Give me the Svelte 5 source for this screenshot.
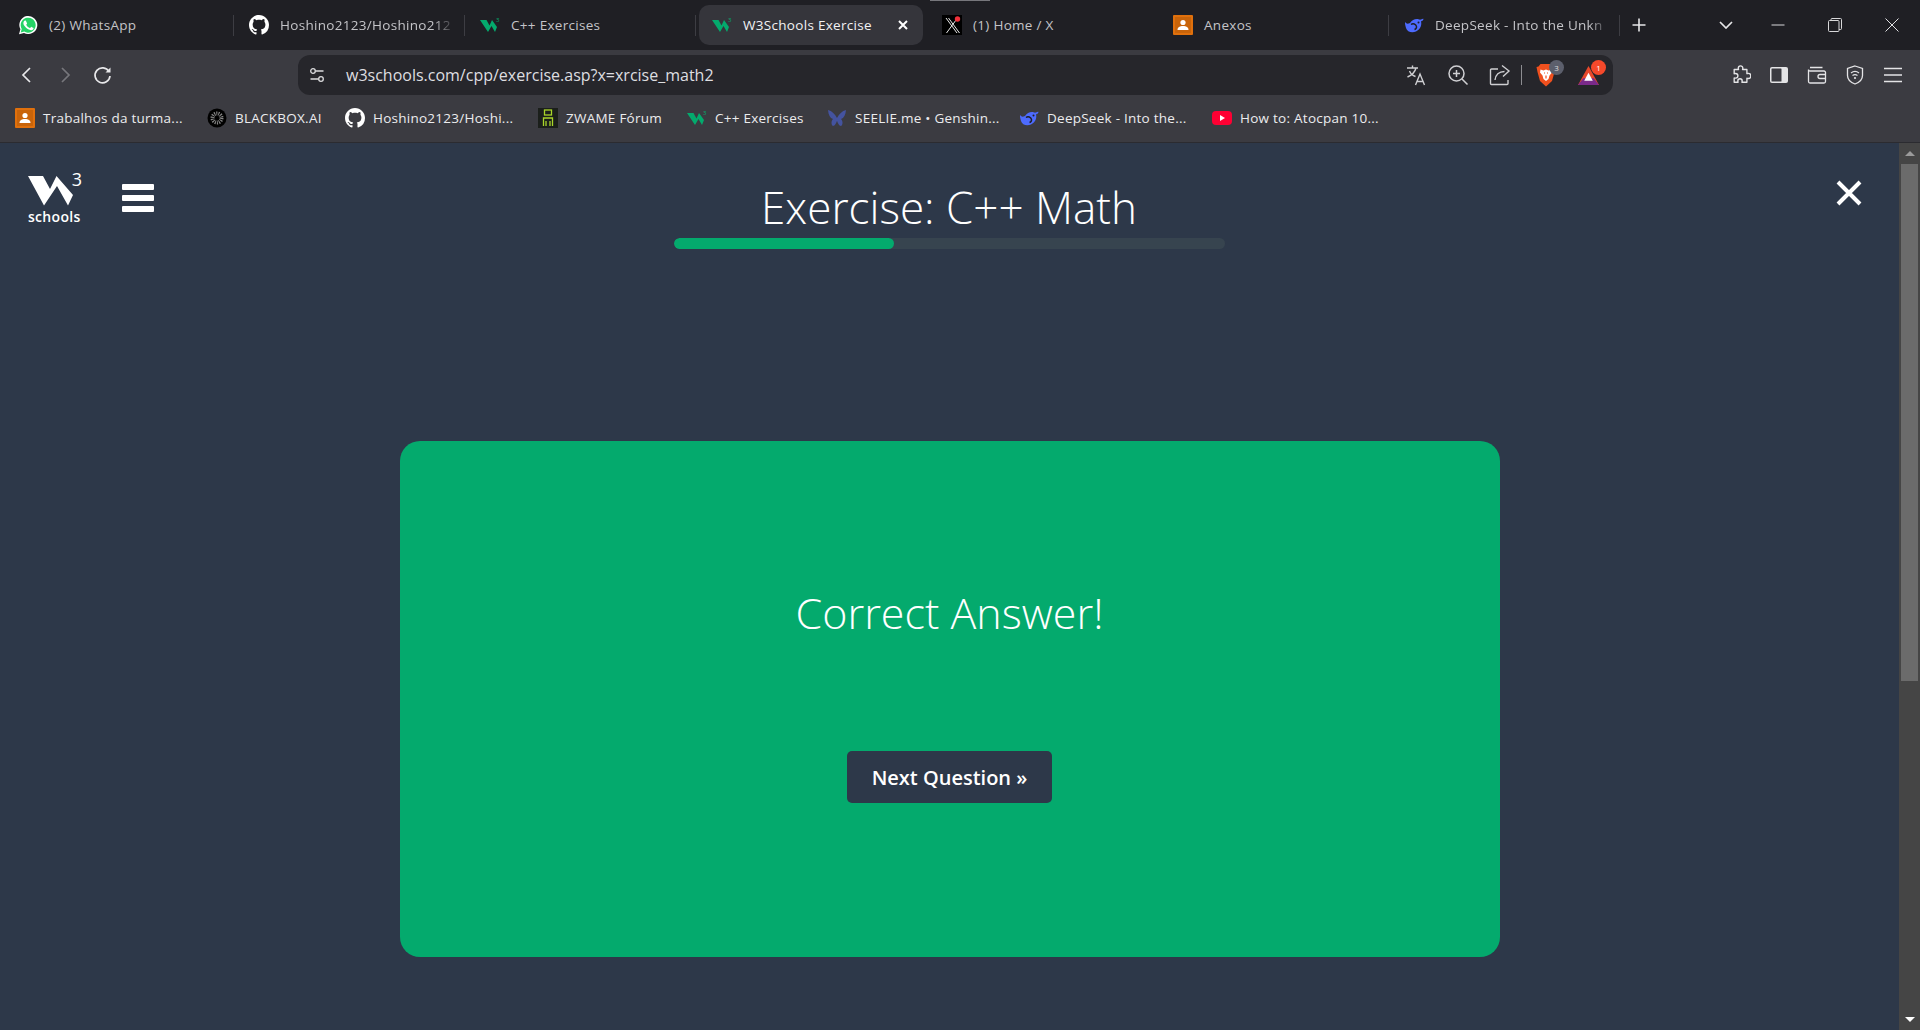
<script lang="ts">
  const ghPath =
    'M8 0C3.58 0 0 3.58 0 8c0 3.54 2.29 6.53 5.47 7.59.4.07.55-.17.55-.38 0-.19-.01-.82-.01-1.49-2.01.37-2.53-.49-2.69-.94-.09-.23-.48-.94-.82-1.13-.28-.15-.68-.52-.01-.53.63-.01 1.08.58 1.23.82.72 1.21 1.87.87 2.33.66.07-.52.28-.87.51-1.07-1.78-.2-3.64-.89-3.64-3.95 0-.87.31-1.59.82-2.15-.08-.2-.36-1.02.08-2.12 0 0 .67-.21 2.2.82.64-.18 1.32-.27 2-.27.68 0 1.36.09 2 .27 1.53-1.04 2.2-.82 2.2-.82.44 1.1.16 1.92.08 2.12.51.56.82 1.27.82 2.15 0 3.07-1.87 3.75-3.65 3.95.29.25.54.73.54 1.48 0 1.07-.01 1.93-.01 2.2 0 .21.15.46.55.38A8.013 8.013 0 0016 8c0-4.42-3.58-8-8-8z';

  const tabs = [
    { icon: 'whatsapp', title: '(2) WhatsApp' },
    { icon: 'github', title: 'Hoshino2123/Hoshino212', fade: true },
    { icon: 'w3', title: 'C++ Exercises' },
    { icon: 'w3', title: 'W3Schools Exercise', active: true },
    { icon: 'x', title: '(1) Home / X', noSep: true, marker: true },
    { icon: 'classroom', title: 'Anexos' },
    { icon: 'deepseek', title: 'DeepSeek - Into the Unkn', fade: true },
  ];

  const bookmarks = [
    { icon: 'classroom', title: 'Trabalhos da turma...', width: 192 },
    { icon: 'blackbox', title: 'BLACKBOX.AI', width: 138 },
    { icon: 'github', title: 'Hoshino2123/Hoshi...', width: 193 },
    { icon: 'zwame', title: 'ZWAME Fórum', width: 149 },
    { icon: 'w3', title: 'C++ Exercises', width: 140 },
    { icon: 'seelie', title: 'SEELIE.me • Genshin...', width: 192 },
    { icon: 'deepseek', title: 'DeepSeek - Into the...', width: 193 },
    { icon: 'youtube', title: 'How to: Atocpan 10...', width: 190 },
  ];
</script>

{#snippet favicon(name)}
  <svg class="favicon" viewBox="0 0 20 20" aria-hidden="true">
    {#if name === 'whatsapp'}
      <path d="M1 19.2l1.4-4.9A9 9 0 1 1 6 17.9z" fill="#fff" />
      <path d="M2.7 17.5l1-3.5A7.5 7.5 0 1 1 6.3 16.6z" fill="#25d366" />
      <path d="M7.3 5.6c-.3 0-.7.1-1 .5-.4.4-.9 1.100-.9 2.200 0 1.200.9 2.400 1 2.500.100.200 1.800 2.800 4.300 3.800 2.100.8 2.500.7 3 .6.500 0 1.500-.6 1.700-1.200.2-.6.2-1 .1-1.100l-2-1c-.2-.1-.4-.1-.5.1l-.8 1c-.1.1-.3.2-.5.100-1.100-.5-2.600-1.500-3.400-3-.1-.2 0-.3.1-.5l.6-.8c.1-.2.1-.3 0-.5L8 6c-.2-.4-.4-.4-.7-.4z" fill="#fff" />
    {:else if name === 'github'}
      <path d={ghPath} transform="scale(1.25)" fill="#fff" />
    {:else if name === 'w3'}
      <polygon points="0,5 6.500,5 9.500,10.500 12,5 17,12 15,17 11.500,11 8,17" fill="#04aa6d" />
      <text x="16" y="7" class="fav-three">3</text>
    {:else if name === 'x'}
      <rect width="20" height="20" fill="#000" />
      <path d="M4 3l11 15M6.500 3l11 15M15.500 3L4.500 18" stroke="#e8e8e8" stroke-width="1" fill="none" />
      <circle cx="15.500" cy="4" r="2.700" fill="#f0303a" />
    {:else if name === 'classroom'}
      <rect width="20" height="20" rx="1" fill="#e0700c" />
      <rect x="2" y="2" width="16" height="16" fill="#c9640a" />
      <circle cx="10" cy="7.500" r="2.600" fill="#fff" />
      <path d="M4.500 15c0-3 2.500-4 5.500-4s5.500 1 5.500 4z" fill="#fff" />
    {:else if name === 'deepseek'}
      <path d="M1 7c2 2.500 3 1.500 5 1 2-3 5-4.500 8-4 1 .2 1.500 1 3 .5 1-.3 2-1 2.500-.5-.3 1.500-1.500 2-2.500 2.500 1 3-.5 8-5 10-4 1.500-9 .5-10-3.500C1.500 11 .8 9 1 7z" fill="#4d6bfe" />
      <path d="M7 9.500c2-1.500 5-.5 5.500 2 .2 1.500-.5 2.500-2 3" stroke="#1f1f24" stroke-width="1.400" fill="none" />
      <circle cx="14.500" cy="7.500" r="1" fill="#1f1f24" />
    {:else if name === 'blackbox'}
      <circle cx="10" cy="10" r="9.500" fill="#000" />
      <circle cx="10" cy="10" r="4.500" fill="none" stroke="#888" stroke-width="4" stroke-dasharray="1 1" />
    {:else if name === 'zwame'}
      <rect width="20" height="20" fill="#1b1f1b" />
      <rect x="6.500" y="2" width="7" height="5" fill="none" stroke="#a9d52a" stroke-width="1.300" />
      <path d="M5.500 18v-8h9v8M8 18v-5M12 18v-5" stroke="#a9d52a" stroke-width="1.300" fill="none" />
    {:else if name === 'seelie'}
      <path d="M1 2c4 1 7 4 9 8 2-4 5-7 9-8-.5 5-2 8-5 9 2 2 2 6 0 7-2 0-3-3-4-5-1 2-2 5-4 5-2-1-2-5 0-7C3 10 1.500 7 1 2z" fill="#44539f" />
    {:else if name === 'youtube'}
      <rect y="3" width="20" height="14" rx="4" fill="#ff0033" />
      <polygon points="8,7 8,13 13,10" fill="#fff" />
    {/if}
  </svg>
{/snippet}

<div class="browser">
  <div class="tabstrip">
    <div class="tabs">
      {#each tabs as tab}
        <div class="tab" class:active={tab.active} class:nosep={tab.noSep || tab.active}>
          {#if tab.marker}<span class="tab-marker"></span>{/if}
          {@render favicon(tab.icon)}
          <span class="tab-title" class:fade={tab.fade}>{tab.title}</span>
          {#if tab.active}
            <svg class="tab-close" viewBox="0 0 12 12" aria-hidden="true">
              <path d="M2 2l8 8M10 2l-8 8" stroke="#fff" stroke-width="2" fill="none" />
            </svg>
          {/if}
        </div>
      {/each}
    </div>
    <div class="new-tab">
      <svg viewBox="0 0 16 16" aria-hidden="true"><path d="M8 1.500v13M1.500 8h13" stroke="#e6e6e8" stroke-width="1.600" fill="none" /></svg>
    </div>
    <div class="strip-gap"></div>
    <div class="tab-list">
      <svg viewBox="0 0 14 8" aria-hidden="true"><path d="M1 1l6 6 6-6" stroke="#e6e6e8" stroke-width="1.700" fill="none" /></svg>
    </div>
    <div class="win-btn"><svg viewBox="0 0 14 14" aria-hidden="true"><path d="M0.500 7h13" stroke="#d8d8da" stroke-width="1" /></svg></div>
    <div class="win-btn"><svg viewBox="0 0 14 14" aria-hidden="true"><rect x="0.500" y="2.500" width="10.500" height="11" rx="1" fill="none" stroke="#d8d8da" /><path d="M3 2.500V1.500a1 1 0 0 1 1-1h8.500a1 1 0 0 1 1 1V10.500a1 1 0 0 1-1 1H11" fill="none" stroke="#d8d8da" /></svg></div>
    <div class="win-btn"><svg viewBox="0 0 14 14" aria-hidden="true"><path d="M0.500 0.500l13 13M13.500 0.500l-13 13" stroke="#e0e0e2" stroke-width="1" /></svg></div>
  </div>

  <div class="toolbar">
    <div class="nav-btn"><svg viewBox="0 0 20 20" aria-hidden="true"><path d="M13 3l-7 7 7 7" stroke="#e8e8ea" stroke-width="1.700" fill="none" /></svg></div>
    <div class="nav-btn"><svg viewBox="0 0 20 20" aria-hidden="true"><path d="M7 3l7 7-7 7" stroke="#77777c" stroke-width="1.700" fill="none" /></svg></div>
    <div class="nav-btn"><svg viewBox="0 0 20 20" aria-hidden="true"><path d="M16 6.500A7.500 7.500 0 1 0 17 11" stroke="#e8e8ea" stroke-width="1.700" fill="none" /><path d="M17.500 2.500v5h-5z" fill="#e8e8ea" /></svg></div>
    <div class="address">
      <svg class="site-settings" viewBox="0 0 16 16" aria-hidden="true">
        <circle cx="4" cy="4" r="2.300" fill="none" stroke="#dcdcde" stroke-width="1.300" />
        <path d="M6.500 4h8M1.500 12h8" stroke="#dcdcde" stroke-width="1.300" />
        <circle cx="12" cy="12" r="2.300" fill="none" stroke="#dcdcde" stroke-width="1.300" />
      </svg>
      <span class="url">w3schools.com/cpp/exercise.asp?x=xrcise_math2</span>
      <div class="addr-actions">
        <div class="addr-slot">
          <svg viewBox="0 0 22 22" aria-hidden="true">
            <path d="M2 4h11M7.500 1.500V4M11 4c-1 4-4 7-8.500 9M4.500 7c1 2.500 3 4.500 6 5.500" stroke="#cfcfd2" stroke-width="1.400" fill="none" />
            <path d="M10.500 21l4.500-11 4.500 11M12 17.500h6" stroke="#cfcfd2" stroke-width="1.400" fill="none" />
          </svg>
        </div>
        <div class="addr-slot">
          <svg viewBox="0 0 22 22" aria-hidden="true">
            <circle cx="9.500" cy="9.500" r="7.500" stroke="#cfcfd2" stroke-width="1.500" fill="none" />
            <path d="M15 15l5.500 5.500M9.500 6v7M6 9.500h7" stroke="#cfcfd2" stroke-width="1.500" fill="none" />
          </svg>
        </div>
        <div class="addr-slot">
          <svg viewBox="0 0 22 22" aria-hidden="true">
            <path d="M9 5H2.500a1 1 0 0 0-1 1v13.500a1 1 0 0 0 1 1H18a1 1 0 0 0 1-1V16" stroke="#cfcfd2" stroke-width="1.400" fill="none" />
            <path d="M6 16c.5-5 4-8.500 9.500-8.500M13 1.500l7 5.500-6 5.500" stroke="#cfcfd2" stroke-width="1.400" fill="none" />
          </svg>
        </div>
        <span class="addr-sep"></span>
        <div class="addr-slot">
          <svg class="brave" viewBox="0 0 20 24" aria-hidden="true">
            <path d="M4.500 1h11l2 2.500 2 .5-1 5-2.500 9L10 23.500 4 18 1.500 9l-1-5 2-.5z" fill="#f0501e" />
            <path d="M4.500 6.500l3 1L10 6.500l2.500 1 3-1 .5 3-2.500 3-1 3.500L10 18l-2.500-2-1-3.500L4 9.500z" fill="#fff" />
            <path d="M8 10h1M11 10h1M10 12.500v3" stroke="#f0501e" stroke-width="1.200" />
          </svg>
          <span class="badge grey">3</span>
        </div>
        <div class="addr-slot">
          <svg class="bat" viewBox="0 0 24 22" aria-hidden="true">
            <polygon points="12,1 23,21 1,21" fill="#e8482b" />
            <polygon points="1,21 23,21 17.500,14 6.500,14" fill="#7a2a8a" />
            <polygon points="12,8 16.500,16.500 7.500,16.500" fill="#fff" />
          </svg>
          <span class="badge red">1</span>
        </div>
      </div>
    </div>
    <div class="tool-group">
      <div class="tool-btn">
        <svg viewBox="0 0 22 22" aria-hidden="true"><path d="M8 3.500a2.500 2.500 0 0 1 5 0c0 .7-.3 1-.3 1.500h4.800v4.500c.5 0 .8-.3 1.500-.3a2.800 2.800 0 0 1 0 5.600c-.7 0-1-.3-1.500-.3v4.500H12c0-.5.3-.8.300-1.500a2.400 2.400 0 0 0-4.800 0c0 .7.300 1 .3 1.500H3.500v-4.800c.5 0 .8.300 1.500.300a2.600 2.600 0 0 0 0-5.200c-.7 0-1 .3-1.500.3V5h4.800c0-.5-.3-.800-.300-1.500z" stroke="#e4e4e6" stroke-width="1.500" fill="none" stroke-linejoin="round" /></svg>
      </div>
      <div class="tool-btn">
        <svg viewBox="0 0 20 20" aria-hidden="true"><rect x="1" y="2" width="18" height="16" rx="2" fill="#e4e4e6" /><rect x="2.500" y="3.500" width="10" height="13" rx="0.500" fill="#3b3b41" /></svg>
      </div>
      <div class="tool-btn">
        <svg viewBox="0 0 20 20" aria-hidden="true"><path d="M3 2.500h12.500M17 6H3a1.500 1.500 0 0 1-1.500-1.500v12A1.500 1.500 0 0 0 3 18h14a1.500 1.500 0 0 0 1.500-1.500V7.500A1.500 1.500 0 0 0 17 6zM18.500 9.500H13a2 2 0 0 0 0 4h5.500" stroke="#e4e4e6" stroke-width="1.300" fill="none" /></svg>
      </div>
      <div class="tool-btn">
        <svg viewBox="0 0 20 20" aria-hidden="true"><path d="M10 1l7.500 2.500v7c0 4-3.500 7-7.500 8.500C6 17.500 2.500 14.500 2.500 10.500v-7z" stroke="#e4e4e6" stroke-width="1.300" fill="none" /><path d="M6 8c2.500-2 5.500-2 8 0M7.500 10.500c1.500-1 3.500-1 5 0" stroke="#e4e4e6" stroke-width="1.300" fill="none" /><circle cx="10" cy="13" r="1.100" fill="#e4e4e6" /></svg>
      </div>
      <div class="tool-btn">
        <svg viewBox="0 0 20 20" aria-hidden="true"><path d="M1 3.500h18M1 10h18M1 16.500h18" stroke="#e4e4e6" stroke-width="1.500" /></svg>
      </div>
    </div>
  </div>

  <div class="bookmarks">
    {#each bookmarks as mark}
      <div class="bookmark" style="width: {mark.width}px">
        {@render favicon(mark.icon)}
        <span>{mark.title}</span>
      </div>
    {/each}
  </div>

  <div class="viewport">
    <main class="page">
      <header class="page-head">
        <div class="head-left">
          <div class="logo">
            <div class="logo-mark">
              <svg viewBox="0 0 46 30" aria-hidden="true">
                <polygon points="0,0 15,0 22,13 28.500,0 45,19 40,29.500 29,10 16,29.500" fill="#fff" />
              </svg>
              <span class="logo-three">3</span>
            </div>
            <span class="logo-word">schools</span>
          </div>
          <div class="burger"><span></span><span></span><span></span></div>
        </div>
        <div class="head-center">
          <h1>Exercise: C++ Math</h1>
          <div class="progress"><div class="progress-fill" style="width: 40%"></div></div>
        </div>
        <div class="head-right">
          <svg class="page-close" viewBox="0 0 26 26" aria-hidden="true">
            <path d="M2 2l22 22M24 2L2 24" stroke="#fff" stroke-width="4" fill="none" />
          </svg>
        </div>
      </header>

      <section class="result-card">
        <h2>Correct Answer!</h2>
        <button class="next-btn">Next Question »</button>
      </section>
    </main>

    <div class="scrollbar">
      <span class="arrow up"></span>
      <div class="scroll-track"><div class="scroll-thumb"></div></div>
      <span class="arrow down"></span>
    </div>
  </div>
</div>

<style>
  :global(body) {
    margin: 0;
    overflow: hidden;
    background: #2d3849;
  }

  .browser {
    display: flex;
    flex-direction: column;
    width: 1920px;
    height: 1030px;
    font-family: "Open Sans", "Noto Sans", sans-serif;
  }

  .favicon {
    width: 20px;
    height: 20px;
    flex-shrink: 0;
  }

  .fav-three {
    font-family: "Open Sans", sans-serif;
    font-size: 6px;
    fill: #04aa6d;
  }

  /* tab strip */
  .tabstrip {
    display: flex;
    align-items: center;
    height: 50px;
    padding-left: 3px;
    background: #1f1f24;
    color: #c4c4c8;
    flex-shrink: 0;
  }

  .tabs {
    display: flex;
    height: 40px;
  }

  .tab {
    position: relative;
    display: flex;
    align-items: center;
    gap: 11px;
    width: 231px;
    padding: 0 10px 0 15px;
    box-sizing: border-box;
    font-size: 13.500px;
    letter-spacing: 0.300px;
    white-space: nowrap;
  }

  .tab:not(.nosep)::after {
    content: '';
    position: absolute;
    right: 0;
    top: 10px;
    bottom: 9px;
    width: 1px;
    background: #3d3d43;
  }

  .tab.active {
    margin: 0 4px 0 3px;
    width: 224px;
    padding: 0 14px 0 13px;
    background: #35353b;
    border-radius: 10px;
    color: #f2f2f4;
  }

  .tab-marker {
    position: absolute;
    left: 3px;
    top: -5px;
    width: 60px;
    height: 1px;
    background: #77777c;
  }

  .tab-title {
    flex: 1;
    min-width: 0;
  }

  .tab-title.fade {
    -webkit-mask-image: linear-gradient(to right, #000 88%, transparent 100%);
    mask-image: linear-gradient(to right, #000 88%, transparent 100%);
  }

  .tab-close {
    width: 12px;
    height: 12px;
    flex-shrink: 0;
  }

  .new-tab {
    display: flex;
    justify-content: center;
    width: 46px;
    margin-left: -4px;
  }

  .new-tab svg {
    width: 16px;
    height: 16px;
  }

  .strip-gap {
    flex: 1;
  }

  .tab-list {
    display: flex;
    justify-content: center;
    width: 46px;
  }

  .tab-list svg {
    width: 14px;
    height: 8px;
  }

  .win-btn {
    display: flex;
    justify-content: center;
    width: 57px;
  }

  .win-btn svg {
    width: 14px;
    height: 14px;
  }

  /* toolbar */
  .toolbar {
    display: flex;
    align-items: center;
    height: 45px;
    padding: 5px 8px 0;
    box-sizing: border-box;
    background: #3b3b41;
    flex-shrink: 0;
  }

  .nav-btn {
    display: flex;
    justify-content: center;
    width: 38px;
  }

  .nav-btn svg {
    width: 20px;
    height: 20px;
  }

  .address {
    display: flex;
    align-items: center;
    flex: 1;
    height: 40px;
    margin-left: 176px;
    padding: 0 4px 0 11px;
    background: #26262b;
    border-radius: 12px;
  }

  .site-settings {
    width: 16px;
    height: 16px;
  }

  .url {
    margin-left: 21px;
    font-size: 16px;
    color: #dedee0;
  }

  .addr-actions {
    display: flex;
    align-items: center;
    margin-left: auto;
  }

  .addr-slot {
    position: relative;
    display: flex;
    justify-content: center;
    align-items: center;
    width: 42px;
    height: 40px;
  }

  .addr-slot svg {
    width: 22px;
    height: 22px;
  }

  .addr-slot svg.brave {
    width: 20px;
    height: 24px;
  }

  .addr-slot svg.bat {
    width: 23px;
    height: 21px;
  }

  .addr-sep {
    width: 1px;
    height: 20px;
    margin-right: 3px;
    background: #8d8d91;
  }

  .badge {
    position: absolute;
    top: 5px;
    left: 24px;
    width: 15px;
    height: 15px;
    border-radius: 50%;
    font-size: 8px;
    line-height: 15px;
    text-align: center;
    color: #fff;
  }

  .badge.grey {
    background: #5c5f6c;
    color: #ddd;
  }

  .badge.red {
    background: #f5492b;
  }

  .tool-group {
    display: flex;
    width: 299px;
    justify-content: flex-end;
  }

  .tool-btn {
    display: flex;
    justify-content: center;
    width: 38px;
  }

  .tool-btn svg {
    width: 20px;
    height: 20px;
  }

  /* bookmarks */
  .bookmarks {
    display: flex;
    align-items: center;
    height: 48px;
    padding: 0 0 1px 15px;
    box-sizing: border-box;
    background: #3b3b41;
    border-bottom: 1px solid #2b2b30;
    flex-shrink: 0;
  }

  .bookmark {
    display: flex;
    align-items: center;
    gap: 8px;
    font-size: 13.500px;
    letter-spacing: 0.250px;
    color: #ececee;
    white-space: nowrap;
  }

  /* page */
  .viewport {
    display: flex;
    flex: 1;
    min-height: 0;
  }

  .page {
    flex: 1;
    min-width: 0;
    background: #2d3849;
    color: #fff;
  }

  .page-head {
    display: grid;
    grid-template-columns: 1fr 551px 1fr;
    height: 298px;
  }

  .head-left {
    display: flex;
    align-items: flex-start;
    padding: 28px 0 0 28px;
  }

  .logo {
    display: flex;
    flex-direction: column;
    width: 54px;
  }

  .logo-mark {
    position: relative;
    height: 37px;
  }

  .logo-mark svg {
    position: absolute;
    left: 0;
    top: 5px;
    width: 46px;
    height: 30px;
  }

  .logo-three {
    position: absolute;
    right: 0;
    top: -4px;
    font-size: 18px;
    line-height: 24px;
    font-weight: 400;
  }

  .logo-word {
    margin-top: 1px;
    font-size: 14px;
    line-height: 16px;
    font-weight: 600;
    letter-spacing: 0.300px;
  }

  .burger {
    display: flex;
    flex-direction: column;
    gap: 5px;
    width: 32px;
    margin: 13px 0 0 40px;
  }

  .burger span {
    height: 6px;
    background: #fff;
    border-radius: 1px;
  }

  .head-center {
    padding-top: 34px;
  }

  .head-center h1 {
    margin: 0 0 0 -1px;
    font-size: 44px;
    line-height: 60px;
    font-weight: 300;
    text-align: center;
    white-space: nowrap;
  }

  .progress {
    height: 11px;
    margin-top: 1px;
    background: #37444f;
    border-radius: 6px;
    overflow: hidden;
  }

  .progress-fill {
    height: 100%;
    background: #04aa6d;
    border-radius: 6px;
  }

  .head-right {
    display: flex;
    justify-content: flex-end;
    padding: 37px 37px 0 0;
  }

  .page-close {
    width: 26px;
    height: 26px;
  }

  .result-card {
    display: flex;
    flex-direction: column;
    align-items: center;
    width: 1100px;
    height: 516px;
    margin: 0 auto;
    padding-top: 142px;
    box-sizing: border-box;
    background: #04aa6d;
    border-radius: 20px;
  }

  .result-card h2 {
    margin: 0;
    font-size: 43px;
    line-height: 60px;
    font-weight: 300;
    white-space: nowrap;
  }

  .next-btn {
    width: 205px;
    height: 52px;
    margin-top: 108px;
    border: none;
    border-radius: 5px;
    background: #2d3849;
    color: #fff;
    font-family: "Open Sans", "Noto Sans", sans-serif;
    font-size: 20px;
    font-weight: 600;
  }

  /* scrollbar */
  .scrollbar {
    display: flex;
    flex-direction: column;
    align-items: center;
    width: 21px;
    background: #454545;
    flex-shrink: 0;
  }

  .arrow {
    width: 0;
    height: 0;
    margin: 8px 0;
    border-left: 5px solid transparent;
    border-right: 5px solid transparent;
  }

  .arrow.up {
    border-bottom: 5px solid #9a9a9a;
  }

  .arrow.down {
    border-top: 5px solid #fff;
  }

  .scroll-track {
    flex: 1;
    width: 100%;
  }

  .scroll-thumb {
    width: 17px;
    height: 517px;
    margin: 0 auto;
    background: #6b6b6b;
  }
</style>
